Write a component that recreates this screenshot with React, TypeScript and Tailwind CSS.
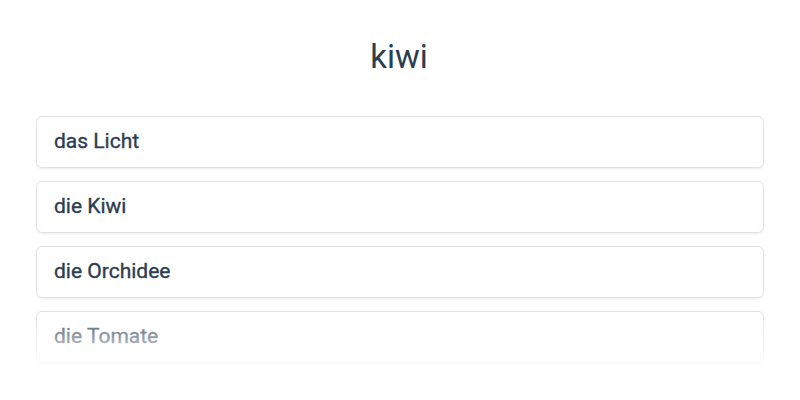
export default function App() {
  const items = ["das Licht", "die Kiwi", "die Orchidee", "die Tomate"];
  return (
    <div className="w-[800px] h-[400px] bg-white overflow-hidden" style={{ fontFamily: "Roboto, 'Liberation Sans', sans-serif" }}>
      <div className="pt-[37px] pr-[2px] text-center text-[33px] leading-[40px] text-[#2c3e50]">kiwi</div>
      <div className="relative mx-[36px] mt-[38px] h-[252px] overflow-hidden">
        <div className="flex flex-col gap-[13px] pt-[1px]">
          {items.map((t) => (
            <div
              key={t}
              className="h-[52px] flex items-center px-[17px] rounded-[6px] border border-[#e2e2e2] bg-white shadow-[0_1px_3px_rgba(0,0,0,0.08)] text-[21px] font-normal text-[#2c3e50] [-webkit-text-stroke:0.35px_#2c3e50]"
            >
              {t}
            </div>
          ))}
        </div>
        <div className="absolute left-0 right-0 bottom-0 h-[58px] bg-gradient-to-b from-white/0 via-white/50 to-white/95"></div>
      </div>
    </div>
  );
}
